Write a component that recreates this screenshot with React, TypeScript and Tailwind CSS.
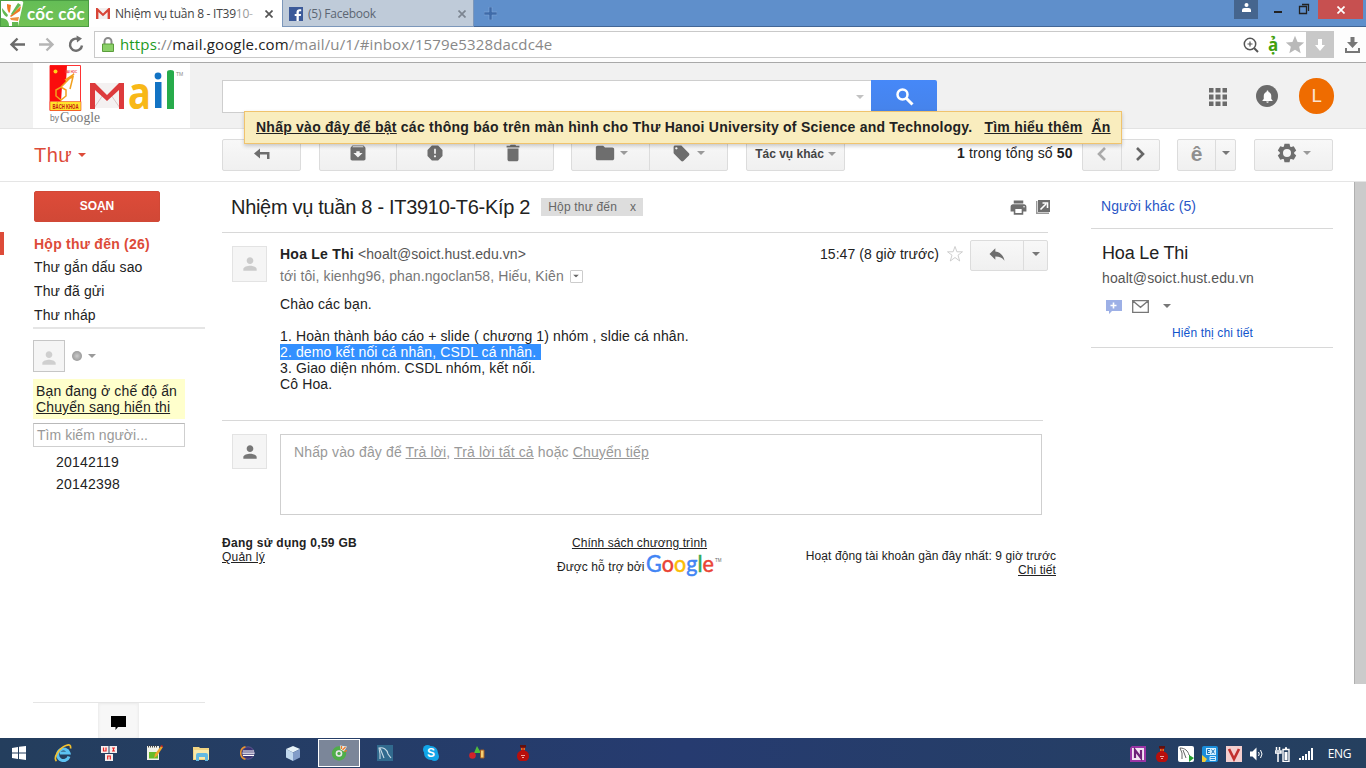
import React from "react";
import {
  MdArchive,
  MdReport,
  MdDelete,
  MdFolder,
  MdLocalOffer,
  MdPrint,
  MdPerson,
  MdNotifications,
  MdReply,
  MdStar,
} from "react-icons/md";

const BTN = "flex h-8 shrink-0 rounded-[2px] border border-[#dcdcdc] bg-linear-to-b from-[#f8f8f8] to-[#f0f0f0] text-[#6e6e6e]";

function Caret({ className = "text-[#9a9a9a]" }: { className?: string }) {
  return (
    <svg viewBox="0 0 8 4" className={`h-1 w-2 shrink-0 ${className}`}>
      <path d="M0 0h8L4 4z" fill="currentColor" />
    </svg>
  );
}

function CloseGlyph({ className }: { className: string }) {
  return (
    <svg viewBox="0 0 8 8" className={`h-2 w-2 shrink-0 ${className}`}>
      <path d="M.5.5l7 7M7.5.5l-7 7" stroke="currentColor" strokeWidth="1.7" />
    </svg>
  );
}

function TabBar() {
  return (
    <div className="flex h-[27px] shrink-0 border-b border-[#426696] bg-[#5f8fcb] font-['Open_Sans',sans-serif] text-xs">
      <div className="flex h-[27px] w-[89px] shrink-0 items-center border border-[#4b9c43] bg-linear-to-b from-[#64bd56] to-[#73c355]">
        <svg viewBox="0 0 23 25" className="h-[25px] w-[23px] shrink-0">
          <path d="M0 0h20q3 0 2 3L17 25H0z" fill="#fff" />
          <path d="M0 17c6 0 8 4 8 8H0z" fill="#62ba50" />
          <path d="M1 7l6 7-1 2C2 14 1 10 1 7z" fill="#65b953" />
          <path d="M6 3l4 1-1 7-1 1C6 9 6 6 6 3z" fill="#ef7925" />
          <path d="M20 5l-1 5-9 6-1-1z" fill="#ef7925" />
          <path d="M17 2l3 2-9 10-1-1z" fill="#65b953" />
          <path d="M9 17l9-1-1 4-7-1z" fill="#ef9141" />
          <path d="M11 21h6v4h-6z" fill="#65b953" />
        </svg>
        <span className="ml-[3px] whitespace-nowrap font-['Lato',sans-serif] text-[17px] leading-[23px] font-bold tracking-[0.27px] text-white">
          cốc cốc
        </span>
      </div>
      <div className="flex h-[27px] w-[193px] shrink-0 items-center bg-white pl-[7px] text-[#444]">
        <svg viewBox="0 0 14 11" className="h-[11px] w-[14px] shrink-0">
          <path d="M0 0h14v11H0z" fill="#f3f0ef" />
          <path d="M0 11V0h1.5L7 5.5 12.5 0H14v11h-2.4V4L7 8.3 2.4 4v7z" fill="#d84437" />
        </svg>
        <span className="ml-[5px] w-[140px] overflow-hidden whitespace-nowrap tracking-[-0.25px]">
          Nhiệm vụ tuần 8 - IT39<span className="text-[#999]">10</span>
          <span className="text-[#bbb]">-</span>
        </span>
        <CloseGlyph className="ml-2.5 text-[#555]" />
      </div>
      <div className="flex h-[27px] w-[192px] shrink-0 items-center border border-t-0 border-[#7c97ba] bg-[#bfcbd9] pt-px pl-1.5 text-[#5c6673]">
        <svg viewBox="0 0 14 14" className="h-3.5 w-3.5 shrink-0">
          <path d="M0 0h14v14H0z" fill="#3c5a99" />
          <path d="M7.5 14V9H5.7V7h1.8V5.3C7.5 3.3 8.7 2.2 10.6 2.2h1.6v2H11c-.9 0-1.2.5-1.2 1.2V7h2.3l-.3 2h-2v5z" fill="#fff" />
        </svg>
        <span className="ml-[5px] w-[150px] whitespace-nowrap tracking-[-0.21px]">(5) Facebook</span>
        <CloseGlyph className="text-[#7c8591]" />
      </div>
      <div className="flex w-8 items-center justify-center">
        <svg viewBox="0 0 13 13" className="h-[13px] w-[13px]">
          <path d="M5 0h3v5h5v3H8v5H5V8H0V5h5z" fill="#3f6ba9" stroke="#89aedb" strokeWidth=".5" />
        </svg>
      </div>
      <div className="ml-auto flex h-[19px] items-center">
        <div className="flex h-[19px] w-6 items-start justify-center bg-[#45658e] pt-[3px]">
          <svg viewBox="0 0 9 9" className="h-[9px] w-[9px]">
            <circle cx="4.5" cy="2" r="2" fill="#fff" />
            <path d="M0 9V7q0-2 2.5-2h4Q9 5 9 7v2z" fill="#fff" />
          </svg>
        </div>
        <svg viewBox="0 0 60 19" className="h-[19px] w-[60px]" fill="none" stroke="#222">
          <path d="M16 12h8" strokeWidth="2" />
          <path d="M41.5 6.5h7v7h-7zM44 4.500h6.500V11" strokeWidth="1.3" />
        </svg>
        <div className="mr-[3px] flex h-[19px] w-[45px] items-center justify-center bg-[#c75050]">
          <CloseGlyph className="text-white" />
        </div>
      </div>
    </div>
  );
}

function AddressBar() {
  return (
    <div className="flex h-9 shrink-0 items-center border-b border-[#a9a9a9] bg-[#fdfdfd] font-['Open_Sans',sans-serif]">
      <svg viewBox="0 0 94 35" className="h-[35px] w-[94px] shrink-0" fill="none" strokeWidth="2.4">
        <path d="M25 17.5H12M17.5 11.5l-6 6 6 6" stroke="#6b6b6b" />
        <path d="M39 17.5h13M46.5 11.5l6 6-6 6" stroke="#b5b5b5" />
        <path d="M82 18.5a6 6 0 1 1-4-6.500" stroke="#6f6f6f" />
        <path d="M76.500 8.500l5.500 3-5 4z" fill="#6f6f6f" />
      </svg>
      <div className="flex h-[27px] w-[1240px] shrink-0 items-center border border-[#c9c9c9] bg-white pl-[7px]">
        <svg viewBox="0 0 12 15" className="h-[15px] w-3 shrink-0">
          <path d="M2.5 8V4.5a3.5 3.5 0 0 1 7 0V8" fill="none" stroke="#8b8b8b" strokeWidth="2" />
          <path d="M.5 7h11v7.5H.5z" fill="#8bd069" stroke="#5a9d3b" />
        </svg>
        <span className="ml-1.5 whitespace-nowrap text-[15px] tracking-[0.14px] text-[#888]">
          <span className="text-[#1d9a1d]">https</span>://<span className="text-[#222]">mail.google.com</span>
          /mail/u/1/#inbox/1579e5328dacdc4e
        </span>
        <div className="ml-auto flex items-center">
          <svg viewBox="0 0 16 16" className="h-4 w-4" fill="none" stroke="#555">
            <circle cx="7" cy="7" r="5.7" strokeWidth="1.5" />
            <path d="M4.5 7h5M7 4.5v5" strokeWidth="1.2" />
            <path d="M11 11l4 4" strokeWidth="2" />
          </svg>
          <span className="ml-[9px] w-[11px] text-[17px] leading-[22px] font-bold text-[#42a010]">ạ̉</span>
          <MdStar className="ml-[5px] h-[22px] w-[22px] text-[#b9b9b9]" />
          <div className="-mr-px flex h-[27px] w-7 items-center justify-center bg-[#c8c8c8]">
            <svg viewBox="0 0 10 12" className="h-3 w-2.5">
              <path d="M3 0h4v6h3l-5 6-5-6h3z" fill="#fff" />
            </svg>
          </div>
        </div>
      </div>
      <svg viewBox="0 0 15 16" className="ml-[11px] h-4 w-[15px]" fill="#777">
        <path d="M5.5 0h4v5H13l-5.5 6L2 5h3.5zM0 11h2v3h11v-3h2v5H0z" />
      </svg>
    </div>
  );
}

function MailLogo() {
  return (
    <svg viewBox="0 0 157 65" className="ml-[33px] h-[65px] w-[157px] shrink-0 bg-white">
      <path d="M17 2.500h30.500v45H17z" fill="#fff" stroke="#f33" />
      <path d="M17 2.500h17l-1 17-4 4-1 15H17z" fill="#fb0d0d" />
      <path d="M17 38.500h31v9H17z" fill="#ffe52c" stroke="#e42" strokeWidth=".6" />
      <path d="M23 27l5-3 5 3v6l-5 4-5-4zM28 24L41 11l-9 6 8-3-3 12" fill="none" stroke="#f2a01e" strokeWidth="1.500" />
      <circle cx="22.500" cy="8.500" r="2" fill="#ffd21b" />
      <text x="19.500" y="45.500" fontSize="7" fontWeight="bold" fill="#c51a10" fontFamily="Liberation Sans" textLength="26" lengthAdjust="spacingAndGlyphs">BÁCH KHOA</text>
      <text x="32" y="9.500" fontSize="4" fontWeight="bold" fill="#e33" fontFamily="Liberation Sans" textLength="12" lengthAdjust="spacingAndGlyphs">ĐẠI HỌC</text>
      <path d="M57 20h34v25H57z" fill="#f4f1f1" />
      <path d="M61 45l9-13M87 45l-9-13" stroke="#d9c5c5" fill="none" />
      <path d="M57 46V20h5l12 12 12-12h5v26h-5V27L74 38 62 27v19z" fill="#dd3a3c" />
      <text x="95" y="45.500" fontSize="44" fontWeight="bold" fontFamily="Open Sans" fill="#f8b817" textLength="23" lengthAdjust="spacingAndGlyphs">a</text>
      <path d="M122 19h6.500v26H122z" fill="#1273c4" />
      <circle cx="125" cy="13" r="3.400" fill="#1273c4" />
      <path d="M134 9q0-2 3.500-2t3.500 2v37h-7z" fill="#27ab4b" />
      <text x="143" y="13" fontSize="5" fill="#888" fontFamily="Liberation Sans">TM</text>
      <text x="17" y="58" fontSize="8.500" fill="#777" fontFamily="Liberation Sans">by</text>
      <text x="27" y="59" fontSize="14" fill="#777" fontFamily="Liberation Serif" textLength="40" lengthAdjust="spacingAndGlyphs">Google</text>
    </svg>
  );
}

function MailHeader() {
  return (
    <div className="relative flex h-[66px] shrink-0 items-start border-b border-[#e3e3e3] bg-[#f1f1f1]">
      <MailLogo />
      <div className="mt-[17px] ml-8 flex h-[33px] w-[649px] shrink-0 items-center justify-end border border-r-0 border-[#cecece] bg-white pr-[7px]">
        <Caret className="text-[#c2c2c2]" />
      </div>
      <div className="mt-[17px] flex h-[33px] w-[66px] shrink-0 items-center justify-center rounded-r-[2px] bg-linear-to-b from-[#4688f8] to-[#4683ea]">
        <svg viewBox="0 0 18 18" className="ml-0.5 h-[18px] w-[18px]" fill="none" stroke="#fff">
          <circle cx="6.5" cy="6.5" r="5" strokeWidth="2.5" />
          <path d="M10.5 10.5l6 6" strokeWidth="3" />
        </svg>
      </div>
      <svg viewBox="0 0 18 18" className="mt-[25px] ml-[272px] h-[18px] w-[18px] shrink-0" fill="#6b6b6b">
        <path d="M0 0h4.500v4.500H0zM6.500 0h5v4.500h-5zM13.500 0H18v4.500h-4.500zM0 6.500h4.500v5H0zM6.500 6.500h5v5h-5zM13.500 6.500H18v5h-4.500zM0 13.500h4.500V18H0zM6.500 13.500h5V18h-5zM13.500 13.500H18V18h-4.500z" />
      </svg>
      <div className="mt-[22px] ml-[29px] flex h-[22px] w-[22px] shrink-0 items-center justify-center rounded-full bg-[#6b6b6b]">
        <MdNotifications className="h-[15px] w-[15px] text-white" />
      </div>
      <div className="mt-[15px] ml-[21px] flex h-9 w-[35px] shrink-0 items-center justify-center rounded-full bg-[#ef6c00] font-['Roboto',sans-serif] text-[19px] text-[#fbe3d0]">
        L
      </div>
      <div className="absolute top-12 left-[244px] z-10 flex h-[33px] w-[878px] items-center border border-[#f0c36d] bg-[#f9edbe] pb-0.5 pl-[11px] text-sm font-bold tracking-[0.24px] whitespace-nowrap text-[#222] shadow-[0_2px_4px_rgba(0,0,0,0.2)]">
        <span><span className="underline">Nhấp vào đây để bật</span> các thông báo trên màn hình cho Thư Hanoi University of Science and Technology.</span>
        <span className="ml-3 underline">Tìm hiểu thêm</span>
        <span className="ml-[9px] underline">Ẩn</span>
      </div>
    </div>
  );
}

function Chevron({ d, className }: { d: string; className: string }) {
  return (
    <svg viewBox="0 0 9 14" className={`h-3.5 w-[9px] ${className}`}>
      <path d={d} fill="none" stroke="currentColor" strokeWidth="2.6" />
    </svg>
  );
}

function GearIcon() {
  const teeth = [0, 60, 120, 180, 240, 300];
  return (
    <svg viewBox="0 0 20 20" className="h-5 w-5" fill="#6e6e6e">
      {teeth.map((a) => (
        <path key={a} d="M7.5.8h5l1 4.200h-7z" transform={`rotate(${a} 10 10)`} />
      ))}
      <circle cx="10" cy="10" r="5.6" fill="none" stroke="#6e6e6e" strokeWidth="3.2" />
    </svg>
  );
}

function Toolbar() {
  return (
    <div className="flex h-[53px] shrink-0 items-start border-b border-[#e5e5e5] pt-2.5">
      <div className="ml-[34px] flex h-8 w-[188px] shrink-0 items-center text-xl tracking-[0.42px] text-[#dd4b39]">
        Thư
        <Caret className="ml-1.5 text-[#dd4b39]" />
      </div>
      <div className={`${BTN} w-[79px] items-center justify-center pb-[3px]`}>
        <svg viewBox="0 0 16 11" className="h-[11px] w-4" fill="#6e6e6e">
          <path d="M0 5.500L6 .5V4h9.500v7H13V6.500H6v4z" />
        </svg>
      </div>
      <div className={`${BTN} ml-[18px] w-[235px] divide-x divide-[#dcdcdc]`}>
        <div className="flex flex-1 items-center justify-center pb-1"><MdArchive className="h-5 w-5" /></div>
        <div className="flex flex-1 items-center justify-center pr-0.5 pb-1"><MdReport className="h-5 w-5" /></div>
        <div className="flex flex-1 items-center justify-center pr-0.5 pb-1"><MdDelete className="h-[22px] w-[22px]" /></div>
      </div>
      <div className={`${BTN} ml-[17px] w-[157px] divide-x divide-[#dcdcdc]`}>
        <div className="flex flex-1 items-center justify-center gap-1 pb-1"><MdFolder className="h-[22px] w-[22px]" /><Caret /></div>
        <div className="flex flex-1 items-center justify-center gap-1.5 pb-1"><MdLocalOffer className="h-[19px] w-[19px]" /><Caret /></div>
      </div>
      <div className={`${BTN} ml-[18px] w-[99px] items-center justify-center gap-1 pb-0.5 text-xs font-bold whitespace-nowrap text-[#444]`}>
        Tác vụ khác
        <Caret />
      </div>
      <span className="ml-[112px] w-[125px] shrink-0 text-sm leading-[29px] tracking-[0.16px] whitespace-nowrap text-[#222]">
        <b>1</b> trong tổng số <b>50</b>
      </span>
      <div className={`${BTN} w-[78px] divide-x divide-[#dcdcdc]`}>
        <div className="flex flex-1 items-center justify-center pb-0.5"><Chevron d="M8 1L2 7l6 6" className="text-[#aaa]" /></div>
        <div className="flex flex-1 items-center justify-center pb-0.5"><Chevron d="M1 1l6 6-6 6" className="text-[#666]" /></div>
      </div>
      <div className={`${BTN} ml-[17px] w-[59px] divide-x divide-[#dcdcdc]`}>
        <div className="flex w-[38px] items-center justify-center pb-1 text-[21px] leading-none font-bold text-[#8f8f8f]">ê</div>
        <div className="flex flex-1 items-center justify-center pb-1"><Caret className="text-[#777]" /></div>
      </div>
      <div className={`${BTN} ml-[18px] w-[79px] items-center justify-center gap-1.5 pb-1`}>
        <GearIcon />
        <Caret />
      </div>
    </div>
  );
}

function Sidebar() {
  return (
    <aside className="flex h-[556px] w-[205px] shrink-0 flex-col text-sm tracking-[0.12px] whitespace-nowrap text-[#222]">
      <button className="mt-[9px] ml-[34px] h-[31px] w-[126px] shrink-0 rounded-[2px] border border-[#d14836] bg-linear-to-b from-[#dd4b39] to-[#d14836] pb-0.5 text-xs leading-[26px] font-bold tracking-[-0.1px] text-white">
        SOẠN
      </button>
      <div className="mt-2.5 h-[23px] border-l-4 border-[#dd4b39] pl-[30px] leading-[25px] font-bold tracking-[0.25px] text-[#dd4b39]">
        Hộp thư đến (26)
      </div>
      <div className="ml-[33px] h-[74px] border-b-2 border-[#e5e5e5] pl-px leading-6">
        <div>Thư gắn dấu sao</div>
        <div>Thư đã gửi</div>
        <div>Thư nháp</div>
      </div>
      <div className="mt-[11px] ml-[33px] flex h-8 items-center">
        <div className="flex h-8 w-8 items-end justify-center border border-[#c6c6c6] bg-[#f5f5f5] pb-[3px]">
          <MdPerson className="h-5 w-5 text-[#cfcfcf]" />
        </div>
        <span className="ml-[7px] h-2.5 w-2.5 rounded-full bg-radial from-[#ccc] to-[#888]" />
        <Caret className="ml-1.5 text-[#9a9a9a]" />
      </div>
      <div className="mt-[7px] ml-[33px] h-10 w-[152px] bg-[#ffffcc] pt-1 pl-[3px] leading-4 tracking-[0.13px]">
        Bạn đang ở chế độ ẩn
        <br />
        <span className="underline">Chuyển sang hiển thi</span>
      </div>
      <div className="mt-1 ml-[33px] h-6 w-[152px] border border-[#cfcfcf] border-t-[#b9b9b9] pl-[3px] leading-[22px] tracking-[0.04px] text-[#999]">
        Tìm kiếm người...
      </div>
      <div className="mt-1 ml-14 leading-[22px] tracking-[0.22px]">
        <div>20142119</div>
        <div>20142398</div>
      </div>
      <div className="mt-auto ml-[33px] h-9 border-t border-[#e5e5e5]">
        <div className="ml-[65px] flex h-[35px] w-[41px] items-center justify-center border border-b-0 border-[#eee] bg-[#f7f7f7] pt-[3px] shadow-[inset_0_0_3px_rgba(0,0,0,0.05)]">
          <svg viewBox="0 0 15 15" className="h-[15px] w-[15px]">
            <path d="M0 1h15v11H7l-2.500 3v-3H0z" fill="#000" />
          </svg>
        </div>
      </div>
    </aside>
  );
}

function Message() {
  return (
    <main className="ml-[17px] w-[834px] shrink-0 text-sm tracking-[0.12px] whitespace-nowrap text-[#222]">
      <div className="flex h-[51px] w-[826px] items-center border-b border-[#d8d8d8] pl-[9px]">
        <h1 className="text-xl tracking-[-0.3px]">Nhiệm vụ tuần 8 - IT3910-T6-Kíp 2</h1>
        <div className="ml-[11px] flex h-[18px] w-[102px] items-center justify-between bg-[#ddd] px-[7px] text-xs tracking-[0.2px] text-[#666]">
          <span>Hộp thư đến</span>
          <span>x</span>
        </div>
        <MdPrint className="ml-auto h-[19px] w-[19px] text-[#6e6e6e]" />
        <svg viewBox="0 0 14 14" className="mr-[-2px] ml-2 h-3.5 w-3.5">
          <path d="M.7 1v12.3H13" fill="none" stroke="#999" strokeWidth="1.4" />
          <path d="M2 0h12v12H2z" fill="#6e6e6e" />
          <path d="M4.5 9.5L10 4M6.5 3h5v5" fill="none" stroke="#fff" strokeWidth="1.6" />
        </svg>
      </div>
      <div className="flex h-[187px] w-[821px]">
        <div className="mt-[13px] ml-2.5 flex h-9 w-[35px] shrink-0 items-center justify-center border border-[#e3e3e3] bg-[#f5f5f5]">
          <MdPerson className="h-5 w-5 text-[#cbcbcb]" />
        </div>
        <div className="ml-[13px] w-[768px] shrink-0">
          <div className="flex h-[62px]">
            <div className="w-[540px] pt-2.5">
              <div className="leading-[22px]">
                <b className="tracking-[0.24px]">Hoa Le Thi</b> <span className="tracking-[0.08px] text-[#555]">&lt;hoalt@soict.hust.edu.vn&gt;</span>
              </div>
              <div className="flex items-center leading-[22px] tracking-[0.1px] text-[#777]">
                tới tôi, kienhg96, phan.ngoclan58, Hiếu, Kiên
                <span className="ml-1.5 flex h-[13px] w-[13px] items-center justify-center rounded-[1px] border border-[#ccc]">
                  <Caret className="scale-75 text-[#666]" />
                </span>
              </div>
            </div>
            <span className="mt-2.5 w-[126px] leading-[22px] tracking-[0.05px]">15:47 (8 giờ trước)</span>
            <svg viewBox="0 0 18 18" className="mt-3 h-[18px] w-[18px] shrink-0">
              <path d="M9 1.5l1.900 5.300h5.600L12 10.200l1.700 5.800L9 12.500 4.300 16 6 10.200 1.500 6.800h5.600z" fill="#fff" stroke="#c8c8c8" strokeWidth=".9" />
            </svg>
            <div className={`${BTN} mt-[7px] ml-1.5 !h-[31px] w-[78px]`}>
              <div className="flex w-[53px] items-center justify-center border-r border-[#dcdcdc] pb-1">
                <MdReply className="h-5 w-5" />
              </div>
              <div className="flex flex-1 items-center justify-center pb-1"><Caret className="text-[#777]" /></div>
            </div>
          </div>
          <div className="w-fit leading-4 tracking-[0.12px]">
            <div className="pt-px">Chào các bạn.</div>
            <br />
            <div>1. Hoàn thành báo cáo + slide ( chương 1) nhóm , sldie cá nhân.</div>
            <div className="w-[261px] bg-[#3390ff] whitespace-pre text-white">2. demo kết nối cá nhân, CSDL cá nhân. </div>
            <div>3. Giao diện nhóm. CSDL nhóm, kết nối.</div>
            <div>Cô Hoa.</div>
          </div>
        </div>
      </div>
      <div className="flex w-[821px] border-t border-[#d8d8d8] pt-[13px]">
        <div className="ml-2.5 flex h-[35px] w-[35px] shrink-0 items-center justify-center border border-[#e3e3e3] bg-[#f5f5f5]">
          <MdPerson className="h-5 w-5 text-[#777]" />
        </div>
        <div className="ml-[13px] h-[81px] w-[762px] shrink-0 border border-[#cfcfcf] pt-1.5 pl-[13px] leading-[22px] tracking-[0.13px] text-[#999]">
          Nhấp vào đây để <span className="underline">Trả lời</span>, <span className="underline">Trả lời tất cả</span> hoặc <span className="underline">Chuyển tiếp</span>
        </div>
      </div>
      <footer className="mt-[21px] flex text-xs leading-[14px] tracking-[0.08px]">
        <div className="w-[335px] shrink-0">
          <div className="font-bold tracking-[0.28px]">Đang sử dụng 0,59 GB</div>
          <div className="tracking-[0.23px] underline">Quản lý</div>
        </div>
        <div className="flex w-[165px] shrink-0 flex-col items-center">
          <span className="underline">Chính sách chương trình</span>
          <div className="mt-px flex w-[165px] items-center">
            <span className="w-[89px] shrink-0 pt-0.5">Được hỗ trợ bởi</span>
            <svg viewBox="0 0 76 30" className="h-[30px] w-[76px] shrink-0">
              <text x="0" y="21" fontFamily="Lato" fontSize="23" strokeWidth=".5" textLength="68" lengthAdjust="spacingAndGlyphs">
                <tspan fill="#4285f4" stroke="#4285f4">G</tspan>
                <tspan fill="#ea4335" stroke="#ea4335">o</tspan>
                <tspan fill="#fbbc05" stroke="#fbbc05">o</tspan>
                <tspan fill="#4285f4" stroke="#4285f4">g</tspan>
                <tspan fill="#34a853" stroke="#34a853">l</tspan>
                <tspan fill="#ea4335" stroke="#ea4335">e</tspan>
              </text>
              <text x="69" y="11" fontSize="4.5" fill="#666" fontFamily="Liberation Sans">TM</text>
            </svg>
          </div>
        </div>
        <div className="w-[334px] pt-[13px] text-right">
          <div>Hoạt động tài khoản gần đây nhất: 9 giờ trước</div>
          <span className="underline">Chi tiết</span>
        </div>
      </footer>
    </main>
  );
}

function ContactPanel() {
  return (
    <aside className="ml-[35px] w-[242px] shrink-0 text-sm whitespace-nowrap text-[#222]">
      <div className="h-[47px] border-b border-[#d8d8d8] pt-[13px] pl-2.5 leading-[22px] tracking-[0.07px] text-[#2a56c6]">
        Người khác (5)
      </div>
      <div className="flex h-[119px] flex-col border-b border-[#d8d8d8] pl-[11px]">
        <div className="mt-[13px] text-lg leading-[22px] tracking-[-0.17px]">Hoa Le Thi</div>
        <div className="mt-[3px] leading-[22px] tracking-[0.1px] text-[#555]">hoalt@soict.hust.edu.vn</div>
        <div className="mt-2 ml-1 flex h-[18px] items-center">
          <svg viewBox="0 0 16 15" className="h-[15px] w-4 shrink-0">
            <path d="M0 1h16v11H6l-3 3v-3H0z" fill="#9db0e6" />
            <path d="M7.5 3.5v6M4.5 6.5h6" stroke="#fff" strokeWidth="1.6" />
          </svg>
          <svg viewBox="0 0 17 13" className="ml-2.5 h-[13px] w-[17px] shrink-0" fill="none" stroke="#777" strokeWidth="1.3">
            <path d="M.7.7h15.600v11.600H.7zM.7.7l7.800 6.600L16.300.7" />
          </svg>
          <Caret className="ml-3.5 text-[#777]" />
        </div>
        <div className="mt-[7px] ml-[70px] text-xs leading-[22px] tracking-[0.14px] text-[#1155cc]">Hiển thị chi tiết</div>
      </div>
    </aside>
  );
}

function RedFigure() {
  return (
    <svg viewBox="0 0 12 16" className="h-4 w-3">
      <path d="M4 1h4v5h1q3 1.500 3 5t-3 5H3q-3-1.500-3-5t3-5h1z" fill="#b80f0c" />
      <path d="M3 0h6v2.500H3z" fill="#5f1210" />
      <path d="M4 3.500h1.500v1H4zM6.500 3.500H8v1H6.500z" fill="#ffd23c" />
      <path d="M4 10.500h4M5 12.500h2" stroke="#f3a7a0" />
    </svg>
  );
}

function Slot({ children, active = false }: { children: React.ReactNode; active?: boolean }) {
  return (
    <div className={active ? "flex h-[28px] w-[42px] shrink-0 items-center justify-center border border-white bg-[#7b8699]" : "flex h-[30px] w-[42px] shrink-0 items-center justify-center"}>
      {children}
    </div>
  );
}

function Taskbar() {
  return (
    <div className="mt-auto flex h-[30px] shrink-0 items-center bg-linear-to-r from-[#243e5d] via-[#263b70] to-[#25405f]">
      <div className="-ml-0.5 flex items-center">
        <Slot>
          <svg viewBox="0 0 14 14" className="h-3.5 w-3.5" fill="#fff">
            <path d="M0 2l6-1v5.500H0zM7 .8L14 0v6.500H7zM0 7.500h6V13l-6-1zM7 7.500h7V14l-7-1z" />
          </svg>
        </Slot>
        <div className="ml-0.5 flex items-center gap-1">
          <Slot>
            <svg viewBox="0 0 18 18" className="h-[18px] w-[18px]" fill="none">
              <path d="M15 12.500A5.800 5.800 0 1 1 15 9H6" stroke="#5cc2f2" strokeWidth="3" />
              <path d="M2.500 17C-1 14 5 4 12 1.500c4-1.500 5 0 4.500 3" stroke="#f3c22f" strokeWidth="1.700" />
            </svg>
          </Slot>
          <Slot>
            <svg viewBox="0 0 16 15" className="h-[15px] w-4">
              <path d="M0 0h7.500v7H0zM8.500 0H16v7H8.500zM4 8h8v7H4z" fill="#f3eeee" />
              <path d="M2.500 1.500V5H5V1.500M11 2h3M12.500 2v3M11 5h3M6.700 13.500V10h2.600v3.500" fill="none" stroke="#e22" strokeWidth="1.200" />
            </svg>
          </Slot>
          <Slot>
            <svg viewBox="0 0 16 16" className="h-4 w-4">
              <path d="M0 1h12v14H0z" fill="#f2f2ea" />
              <path d="M2 7h9v6.500H2z" fill="#69bb2a" />
              <path d="M1 1.500h10" stroke="#444" strokeDasharray="1 1" strokeWidth="2" />
              <path d="M7 13l1-4 6-8 2 1-6 9z" fill="#eda52c" />
              <path d="M13.500 1l1-1L16 1l-.5 1.500z" fill="#c22" />
            </svg>
          </Slot>
          <Slot>
            <svg viewBox="0 0 17 15" className="h-[15px] w-[17px]">
              <path d="M0 1h6l1 1h9v12H0z" fill="#f1d482" />
              <path d="M1 4h15v9H1z" fill="#fae9aa" />
              <path d="M3 15V9q0-2 2-2h8q2 0 2 2v6h-3v-4H6v4z" fill="#63b9e2" />
            </svg>
          </Slot>
          <Slot>
            <svg viewBox="0 0 15 14" className="h-3.5 w-[15px]">
              <circle cx="8" cy="7" r="6.200" fill="#3b3573" stroke="#6a6299" strokeWidth=".8" />
              <path d="M5.500 .8a6.400 6.400 0 0 0 0 12.400" fill="none" stroke="#ee942d" strokeWidth="1.500" />
              <path d="M3 5h11M2.500 7.200H14.500M3 9.400h11" stroke="#fff" strokeWidth="1.200" />
            </svg>
          </Slot>
          <Slot>
            <svg viewBox="0 0 14 15" className="h-[15px] w-3.5">
              <path d="M7 0l7 3-7 3.500L0 3z" fill="#e6f2f8" />
              <path d="M0 3l7 3.500V15l-7-3.500z" fill="#c0d8ee" />
              <path d="M14 3L7 6.500V15l7-3.500z" fill="#829dc8" />
            </svg>
          </Slot>
          <Slot active>
            <svg viewBox="0 0 16 16" className="h-4 w-4" fill="none">
              <circle cx="8" cy="8.500" r="5.200" stroke="#4fae49" strokeWidth="4" />
              <circle cx="8" cy="8.500" r="3.300" fill="#e9ede8" />
              <circle cx="8" cy="8.500" r="1.700" fill="#4fae49" />
              <path d="M9.500 4.500l-.5-4 7 1-3 5z" fill="#e9ede8" />
              <path d="M10.500 4V1M11.500 5l3-3M13 6.500l3-1" stroke="#f0792a" strokeWidth="1.300" />
            </svg>
          </Slot>
          <Slot>
            <svg viewBox="0 0 16 16" className="h-4 w-4">
              <path d="M0 0h16v16H0z" fill="#316a8e" />
              <path d="M3 14V9L2 3c4-1 8 1 9 6l3 4M3 3l4 10" fill="none" stroke="#c8dbe7" strokeWidth="1.100" />
            </svg>
          </Slot>
          <Slot>
            <svg viewBox="0 0 16 16" className="h-4 w-4">
              <circle cx="4.500" cy="4.500" r="4.500" fill="#12a5e8" />
              <circle cx="11.500" cy="11.500" r="4.500" fill="#12a5e8" />
              <circle cx="8" cy="8" r="7" fill="#12a5e8" />
              <text x="4" y="12.300" fontSize="12" fontWeight="bold" fill="#fff" fontFamily="Liberation Sans">S</text>
            </svg>
          </Slot>
          <Slot>
            <svg viewBox="0 0 16 14" className="h-3.5 w-4">
              <path d="M5 7l3-7 4 7z" fill="#4fbd3c" />
              <circle cx="3.500" cy="9.500" r="3.300" fill="#d3242a" />
              <path d="M11.500 4H15v8h-3.500z" fill="#f6cf72" stroke="#a65f22" />
            </svg>
          </Slot>
          <Slot>
            <RedFigure />
          </Slot>
        </div>
      </div>
      <div className="mr-[15px] ml-auto flex items-center gap-2 pt-0.5">
        <svg viewBox="0 0 16 16" className="h-4 w-4">
          <path d="M2 0h14v16H0V2z" fill="#9a35a5" />
          <path d="M2 2h12v12H2z" fill="#f3e5f3" />
          <path d="M5 12V4l6 8V4" fill="none" stroke="#6d2077" strokeWidth="2.200" />
        </svg>
        <div className="flex w-4 justify-center"><RedFigure /></div>
        <svg viewBox="0 0 16 16" className="h-4 w-4">
          <rect width="16" height="16" rx="2" fill="#fff" />
          <path d="M4 13V7L2 2c5 0 8 3 9 7l2 2M5 4l3 8" fill="none" stroke="#666" />
          <path d="M11 9l5 3-5 4z" fill="#25a331" />
        </svg>
        <svg viewBox="0 0 16 16" className="h-4 w-4">
          <rect width="16" height="16" rx="2" fill="#1b8edb" />
          <path d="M4 2h10v7H4z" fill="#d3efff" />
          <path d="M8 3.500H5.500v4H8M5.500 5.500h2M9.500 3.500l3 4M12.500 3.500l-3 4" fill="none" stroke="#1670b5" />
          <path d="M8 10.500h5.500v4H8zM8 12.500h5.500" fill="none" stroke="#d3efff" />
          <path d="M0 9l5 4-2 3H0z" fill="#f1cb35" />
        </svg>
        <svg viewBox="0 0 16 16" className="h-4 w-4">
          <path d="M0 0h16v16H0z" fill="#f4cfcf" />
          <path d="M3 3l5 10 5-10" fill="none" stroke="#c2302e" strokeWidth="2.700" />
        </svg>
        <svg viewBox="0 0 15 14" className="h-3.5 w-[15px]" fill="none" stroke="#fff">
          <path d="M0 4.500h2.500l4-4v13l-4-4H0z" fill="#fff" stroke="none" />
          <path d="M8.500 5q1.500 2 0 4M10.500 3q3 4 0 8" />
        </svg>
        <svg viewBox="0 0 15 15" className="ml-0.5 h-[15px] w-[15px]" fill="none" stroke="#fff">
          <path d="M1.5 0v3M4.5 0v3M0 4h6v2H0zM3 6v9" strokeWidth="1.500" />
          <path d="M8 2.500h6v12H8zM10 1h2" strokeWidth="1.400" />
          <path d="M9.500 5h3v8h-3z" fill="#fff" stroke="none" />
        </svg>
        <svg viewBox="0 0 15 12" className="ml-px h-3 w-[15px]" fill="#fff">
          <path d="M0 10h2v2H0zM3 8h2v4H3zM6 6h2v6H6zM9 3h2v9H9zM12 0h2v12h-2z" />
        </svg>
        <span className="ml-1.5 font-['Open_Sans',sans-serif] text-xs tracking-[-0.4px] text-white">ENG</span>
      </div>
    </div>
  );
}

export default function App() {
  return (
    <div className="flex h-[768px] w-[1366px] flex-col overflow-hidden bg-white font-['Liberation_Sans',Arial,sans-serif]">
      <TabBar />
      <AddressBar />
      <MailHeader />
      <Toolbar />
      <div className="flex h-[556px] shrink-0">
        <Sidebar />
        <Message />
        <ContactPanel />
        <div className="ml-auto h-[502px] w-3 shrink-0 border-l border-[#b0b0b0] bg-[#cbcbcb]" />
      </div>
      <Taskbar />
    </div>
  );
}
